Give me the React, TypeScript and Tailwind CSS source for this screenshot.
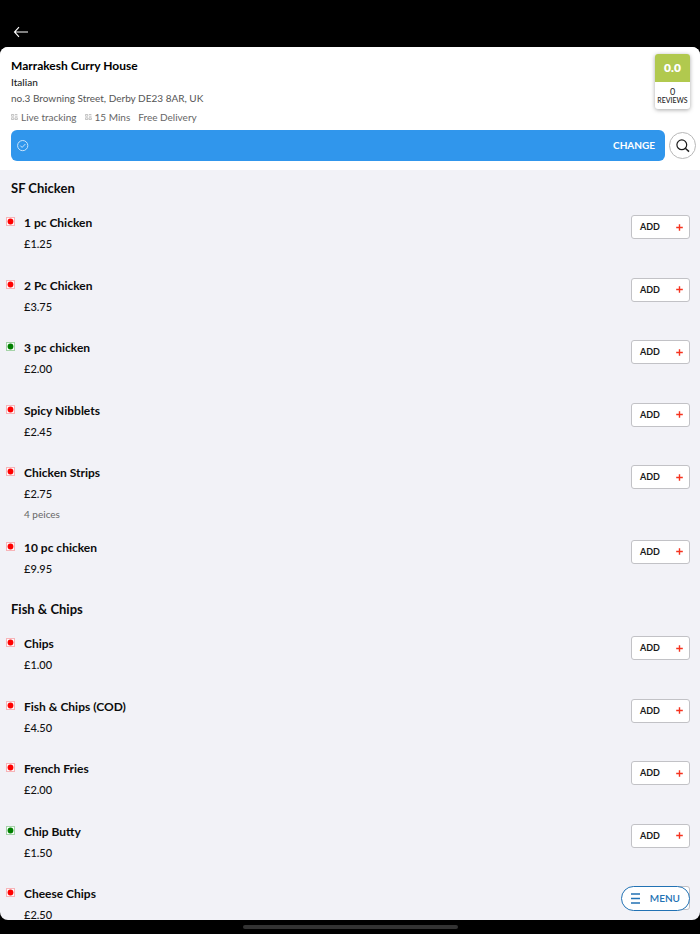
interface MenuItem {
  name: string;
  price: string;
  veg?: boolean;
  description?: string;
}

interface MenuSection {
  title: string;
  items: MenuItem[];
}

const sections: MenuSection[] = [
  {
    title: 'SF Chicken',
    items: [
      { name: '1 pc Chicken', price: '£1.25' },
      { name: '2 Pc Chicken', price: '£3.75' },
      { name: '3 pc chicken', price: '£2.00', veg: true },
      { name: 'Spicy Nibblets', price: '£2.45' },
      { name: 'Chicken Strips', price: '£2.75', description: '4 peices' },
      { name: '10 pc chicken', price: '£9.95' },
    ],
  },
  {
    title: 'Fish & Chips',
    items: [
      { name: 'Chips', price: '£1.00' },
      { name: 'Fish & Chips (COD)', price: '£4.50' },
      { name: 'French Fries', price: '£2.00' },
      { name: 'Chip Butty', price: '£1.50', veg: true },
      { name: 'Cheese Chips', price: '£2.50' },
    ],
  },
];

function BackIcon() {
  return (
    <svg width="15" height="12" viewBox="0 0 15 12" fill="none" stroke="#fff" strokeWidth="1.1">
      <path d="M15 6H1.5M6 1.2L1.5 6l4.5 4.8" />
    </svg>
  );
}

function FeatureIcon() {
  return (
    <svg width="7" height="6" viewBox="0 0 7 6" fill="none" stroke="#b5b5b5" strokeWidth="0.8">
      <path d="M0.4 0.5h2.4v1.7H0.4zM4 0.5h2.4M4 2.2h2.6M0.4 3.8h2.4v1.7H0.4zM4 3.8h2.4v1.7H4z" />
    </svg>
  );
}

function CheckIcon() {
  return (
    <svg width="12" height="12" viewBox="0 0 12 12" fill="none" stroke="#d9ecfd" strokeWidth="0.9">
      <circle cx="5.7" cy="5.6" r="5.1" />
      <path d="M3.3 5.6l1.8 1.8 3.3-3.4" />
    </svg>
  );
}

function SearchIcon() {
  return (
    <svg width="14" height="14" viewBox="0 0 14 14" fill="none" stroke="#1c1c1c" strokeWidth="1.2">
      <circle cx="5.8" cy="5.8" r="4.9" />
      <path d="M9.3 9.3l3.7 3.3" strokeWidth="1.5" />
    </svg>
  );
}

function MenuIcon() {
  return (
    <svg width="9" height="11" viewBox="0 0 9 11" fill="none" stroke="#2272b4" strokeWidth="1.6">
      <path d="M0 1h9M0 5.5h9M0 10h9" />
    </svg>
  );
}

function Marker({ veg }: { veg?: boolean }) {
  return (
    <span
      className={
        veg
          ? 'mt-1 flex size-[9px] shrink-0 items-center justify-center border border-[#a5d3a8] bg-[#f6fbf8]'
          : 'mt-1 flex size-[9px] shrink-0 items-center justify-center border border-[#f7b4b8] bg-[#fdf6f8]'
      }
    >
      <svg width="7" height="7" viewBox="0 0 7 7" className="shrink-0">
        <circle cx="3.5" cy="3.5" r="2.9" fill={veg ? '#008000' : '#ff0000'} />
      </svg>
    </span>
  );
}

function ItemRow({ item }: { item: MenuItem }) {
  return (
    <li className={item.description ? 'flex items-start pr-[10px] pb-4 pl-[6px]' : 'flex items-start pr-[10px] pb-[23px] pl-[6px]'}>
      <Marker veg={item.veg} />
      <div className="ml-[9px] flex-1">
        <h3 className="text-[12px] leading-5 font-bold text-[#0c0c0c]">{item.name}</h3>
        <p className="mt-[3px] text-[11px] leading-normal font-medium text-[#111]">{item.price}</p>
        {item.description && <p className="mt-[3px] text-[10px] leading-4 text-[#666]">{item.description}</p>}
      </div>
      <button
        type="button"
        aria-label={`Add ${item.name}`}
        className="mt-[2px] flex h-6 w-[59px] items-center justify-between rounded-[3px] border border-[#c2c2c6] bg-white pr-[6px] pl-2 text-[9px] font-bold text-[#1a1a1a]"
      >
        ADD
        <svg width="7" height="7" viewBox="0 0 7 7" stroke="#f5331f" strokeWidth="1.4">
          <path d="M3.5 0.2v6.6M0.2 3.5h6.6" />
        </svg>
      </button>
    </li>
  );
}

function Header() {
  return (
    <header className="bg-white pt-[10px] pb-[9px]">
      <div className="flex items-start justify-between pr-[10px] pl-[11px]">
        <div>
          <h1 className="text-[12px] leading-[17px] font-bold text-black">Marrakesh Curry House</h1>
          <p className="text-[10px] leading-4 font-medium text-[#1c1c1c]">Italian</p>
          <p className="text-[10px] leading-4 text-[#555]">no.3 Browning Street, Derby DE23 8AR, UK</p>
          <ul className="mt-[3px] flex gap-2 text-[10px] leading-4 text-[#666]">
            <li className="flex items-center gap-[3px]"><FeatureIcon />Live tracking</li>
            <li className="flex items-center gap-[3px]"><FeatureIcon />15 Mins</li>
            <li>Free Delivery</li>
          </ul>
        </div>
        <div className="mt-[-3px] w-[35px] overflow-hidden rounded-[3px] bg-white text-center shadow-[0_1px_4px_rgba(0,0,0,0.35)]">
          <div className="bg-[#b1c94e] text-[12px] leading-7 font-extrabold text-white">0.0</div>
          <div className="pt-[5px] pb-1 text-[#222]">
            <div className="text-[9px] leading-[9px]">0</div>
            <div className="text-[7px] leading-[9px] font-medium">REVIEWS</div>
          </div>
        </div>
      </div>
      <div className="mt-[5px] flex items-center gap-1 pr-1 pl-[11px]">
        <div className="flex h-[31px] flex-1 items-center justify-between rounded-[6px] bg-[#3096ec] pr-[10px] pl-[6px]">
          <CheckIcon />
          <button type="button" className="text-[10px] font-bold text-white">CHANGE</button>
        </div>
        <button type="button" aria-label="Search" className="flex size-[27px] items-center justify-center rounded-full border border-[#b8b8b8] bg-white">
          <SearchIcon />
        </button>
      </div>
    </header>
  );
}

export default function App() {
  return (
    <div className="flex h-screen flex-col bg-black font-['Lato',sans-serif]">
      <nav className="flex px-[13px] pt-[26px] pb-[9px]">
        <button type="button" aria-label="Back">
          <BackIcon />
        </button>
      </nav>
      <div className="relative flex min-h-0 flex-1 flex-col overflow-hidden rounded-[8px] bg-[#f2f2f7]">
        <Header />
        <main className="min-h-0 flex-1 overflow-y-auto pt-[9px] [scrollbar-width:none]">
          {sections.map((section) => (
            <section key={section.title}>
              <h2 className="mb-4 pl-[11px] text-[13px] leading-[18px] font-bold text-[#0c0c0c]">{section.title}</h2>
              <ul>
                {section.items.map((item) => (
                  <ItemRow key={item.name} item={item} />
                ))}
              </ul>
            </section>
          ))}
        </main>
        {/* Floating category menu */}
        <button
          type="button"
          className="absolute right-[10px] bottom-[9px] flex h-[25px] w-[69px] items-center justify-between rounded-full border border-[#2272b4] bg-white px-[9px] text-[10px] font-semibold text-[#2272b4]"
        >
          <MenuIcon />
          MENU
        </button>
      </div>
      {/* Home indicator */}
      <div className="flex h-[14px] items-center justify-center">
        <div className="h-1 w-[215px] rounded-full bg-[#333]" />
      </div>
    </div>
  );
}
